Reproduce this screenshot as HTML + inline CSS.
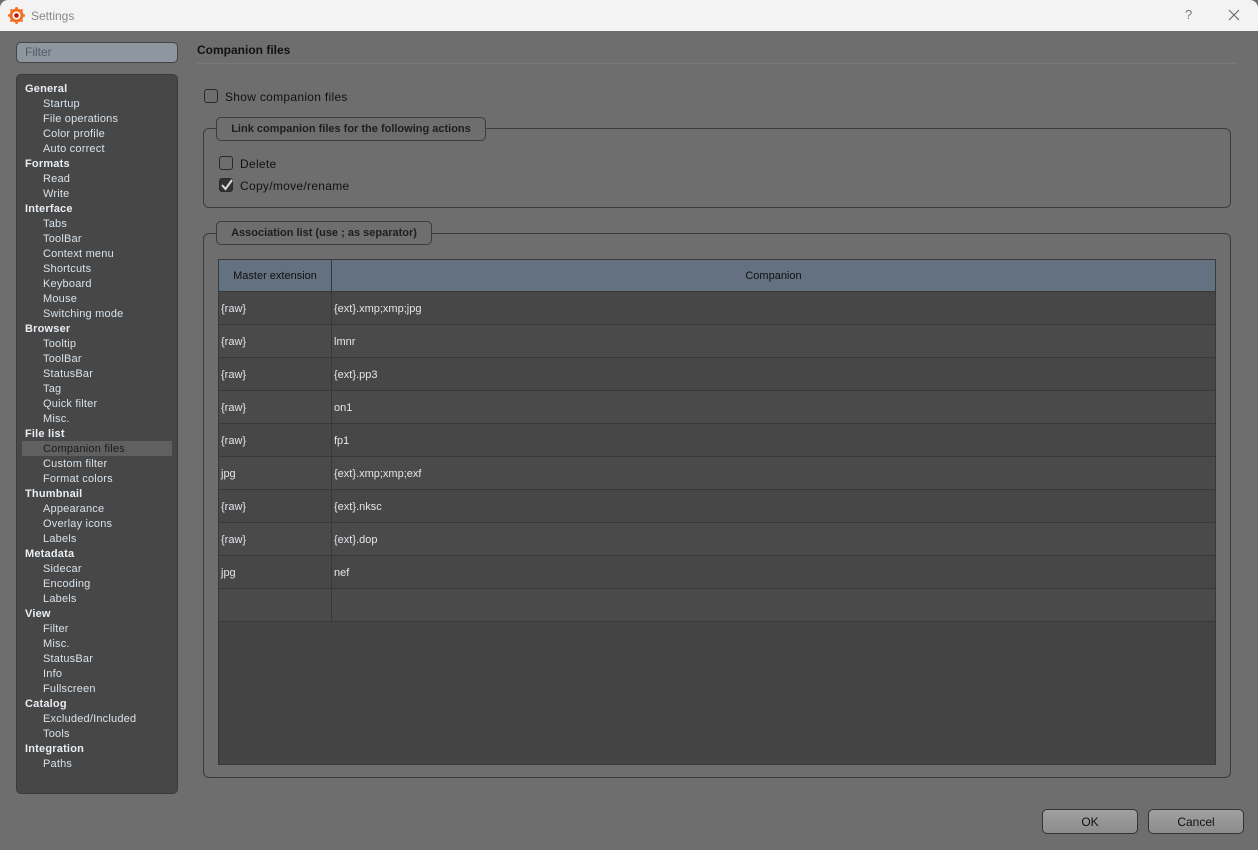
<!DOCTYPE html>
<html><head><meta charset="utf-8"><style>
*{box-sizing:border-box;margin:0;padding:0}
body{width:1258px;height:850px;background:#6e6e6e;font-family:"Liberation Sans","DejaVu Sans",sans-serif;font-size:12px;position:relative;overflow:hidden;color:#111}
.abs{position:absolute}
#title{left:0;top:0;width:1258px;height:31px;background:#f3f3f3;border-radius:8px 8px 0 0}
#filter{left:16px;top:42px;width:162px;height:21px;background:#8e979f;border:1px solid #444;border-radius:5px;color:#525a66;padding-left:8px;line-height:19px;font-size:12px}
#side{left:16px;top:74px;width:162px;height:720px;background:#474747;border:1px solid #3a3a3a;border-radius:5px}
.it{position:absolute;left:26px;font-size:11px;color:#d8e2ea;line-height:15px;white-space:nowrap;letter-spacing:0.2px}
.h{left:8px;font-weight:bold;color:#e8eef4}
.sel{position:absolute;left:5px;width:150px;height:15px;background:#606060}
.grp{border:1px solid #3c3c3c;border-radius:6px}
.leg{border:1px solid #3c3c3c;border-radius:5px;background:#6e6e6e;font-weight:bold;font-size:11px;color:#1e1e1e;line-height:22px;height:24px;text-align:center}
.cb{width:14px;height:14px;border:1px solid #2a2a2a;border-radius:3px;background:#6e6e6e}
.lbl{font-size:12px;color:#111}
table{border-collapse:collapse;font-size:11px}
td{border:1px solid #383838;height:33px;color:#e2e6ea;padding-left:2px;padding-top:2px}
th{border:1px solid #383838;height:32px;background:#637180;font-weight:normal;color:#111;font-size:11px;padding-top:1px}
.btn{width:96px;height:25px;border:1px solid #333;border-radius:5px;background:linear-gradient(#a0a0a0,#8c8c8c);text-align:center;line-height:24px;font-size:12px;color:#111}
</style></head><body>
<div id="title" class="abs">
<svg class="abs" style="left:8px;top:7px" width="17" height="17" viewBox="0 0 17 17"><circle cx="8.5" cy="8.5" r="7" fill="#f07020"/><g stroke="#f07020" stroke-width="2.2"><line x1="8.5" y1="0" x2="8.5" y2="17"/><line x1="0" y1="8.5" x2="17" y2="8.5"/><line x1="2.5" y1="2.5" x2="14.5" y2="14.5"/><line x1="14.5" y1="2.5" x2="2.5" y2="14.5"/></g><circle cx="8.5" cy="8.5" r="4" fill="#fff"/><circle cx="8.5" cy="8.5" r="2.3" fill="#c01010"/></svg>
<div class="abs" style="left:31px;top:9px;font-size:12px;color:#888">Settings</div>
<div class="abs" style="left:1185px;top:7px;font-size:13px;color:#777">?</div>
<svg class="abs" style="left:1228px;top:9px" width="12" height="12"><path d="M1 1L11 11M11 1L1 11" stroke="#666" stroke-width="1.1"/></svg>
</div>
<div id="filter" class="abs">Filter</div>
<div id="side" class="abs">
<div class="sel" style="top:366px"></div>
<div id="items"></div>
</div>
<div class="abs" style="left:197px;top:43px;font-weight:bold;font-size:12px;color:#111">Companion files</div>
<div class="abs" style="left:197px;top:63px;width:1039px;height:1px;background:#7a7a7a"></div>
<div class="abs cb" style="left:204px;top:89px"></div>
<div class="abs lbl" style="left:225px;top:90px;letter-spacing:0.3px">Show companion files</div>
<div class="abs grp" style="left:203px;top:128px;width:1028px;height:80px"></div>
<div class="abs leg" style="left:216px;top:117px;width:270px">Link companion files for the following actions</div>
<div class="abs cb" style="left:219px;top:156px"></div>
<div class="abs lbl" style="left:240px;top:157px;letter-spacing:0.3px">Delete</div>
<div class="abs cb" style="left:219px;top:178px;background:#333"><svg width="14" height="14" style="position:absolute;left:0;top:-1px"><path d="M2 7L5.5 11L12 2" stroke="#ddd" stroke-width="2" fill="none"/></svg></div>
<div class="abs lbl" style="left:240px;top:179px;letter-spacing:0.3px">Copy/move/rename</div>
<div class="abs grp" style="left:203px;top:233px;width:1028px;height:545px"></div>
<div class="abs leg" style="left:216px;top:221px;width:216px">Association list (use ; as separator)</div>
<div class="abs" style="left:218px;top:259px;width:998px;height:506px;background:#444;border:1px solid #383838">
<table style="width:998px;margin:-1px 0 0 -1px">
<tr><th style="width:113px">Master extension</th><th>Companion</th></tr>
<tr style="background:#474747"><td>{raw}</td><td>{ext}.xmp;xmp;jpg</td></tr>
<tr style="background:#4a4a4a"><td>{raw}</td><td>lmnr</td></tr>
<tr style="background:#474747"><td>{raw}</td><td>{ext}.pp3</td></tr>
<tr style="background:#4a4a4a"><td>{raw}</td><td>on1</td></tr>
<tr style="background:#474747"><td>{raw}</td><td>fp1</td></tr>
<tr style="background:#4a4a4a"><td>jpg</td><td>{ext}.xmp;xmp;exf</td></tr>
<tr style="background:#474747"><td>{raw}</td><td>{ext}.nksc</td></tr>
<tr style="background:#4a4a4a"><td>{raw}</td><td>{ext}.dop</td></tr>
<tr style="background:#474747"><td>jpg</td><td>nef</td></tr>
<tr style="background:#4a4a4a"><td></td><td></td></tr>
</table></div>
<div class="abs btn" style="left:1042px;top:809px">OK</div>
<div class="abs btn" style="left:1148px;top:809px">Cancel</div>
<script>
var d=[["General",1],["Startup"],["File operations"],["Color profile"],["Auto correct"],["Formats",1],["Read"],["Write"],["Interface",1],["Tabs"],["ToolBar"],["Context menu"],["Shortcuts"],["Keyboard"],["Mouse"],["Switching mode"],["Browser",1],["Tooltip"],["ToolBar"],["StatusBar"],["Tag"],["Quick filter"],["Misc."],["File list",1],["Companion files",0,1],["Custom filter"],["Format colors"],["Thumbnail",1],["Appearance"],["Overlay icons"],["Labels"],["Metadata",1],["Sidecar"],["Encoding"],["Labels"],["View",1],["Filter"],["Misc."],["StatusBar"],["Info"],["Fullscreen"],["Catalog",1],["Excluded/Included"],["Tools"],["Integration",1],["Paths"]];
var h="";d.forEach(function(e,i){h+='<div class="it'+(e[1]?' h':'')+'" style="top:'+(7+i*15)+'px'+(e[2]?';color:#1a1a1a':'')+'">'+e[0]+'</div>';});
document.getElementById("items").innerHTML=h;
</script>
</body></html>
